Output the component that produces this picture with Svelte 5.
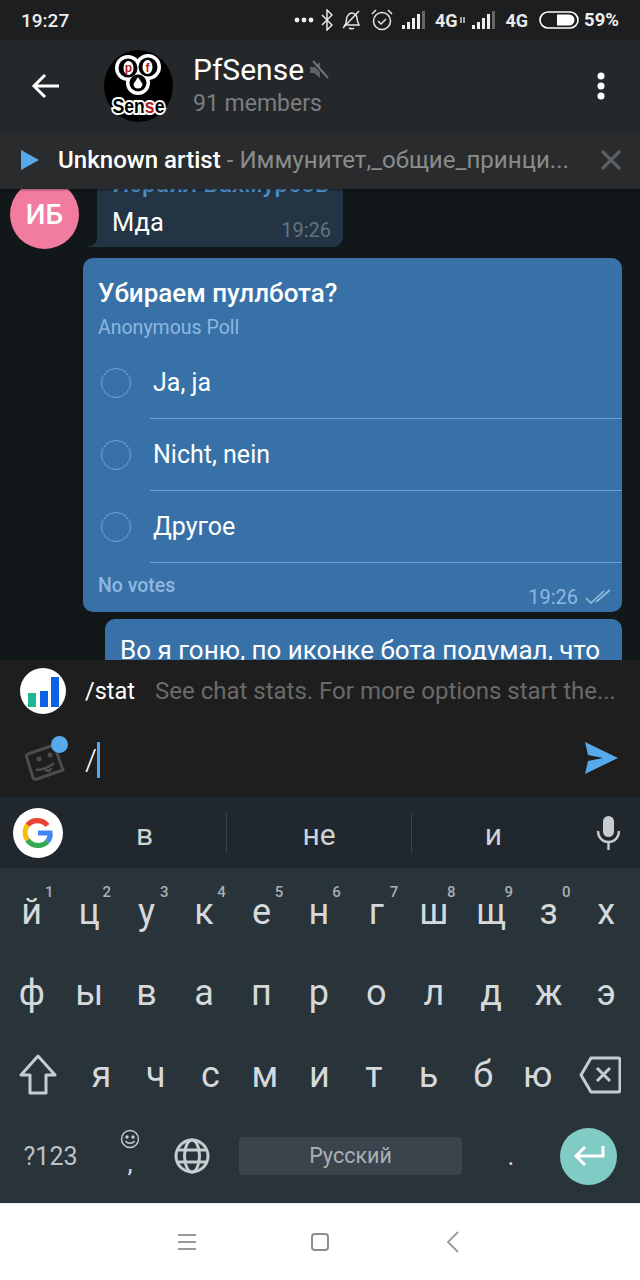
<script>
  const row1 = [['й','1'],['ц','2'],['у','3'],['к','4'],['е','5'],['н','6'],['г','7'],['ш','8'],['щ','9'],['з','0'],['х','']];
  const row2 = ['ф','ы','в','а','п','р','о','л','д','ж','э'];
  const row3 = ['я','ч','с','м','и','т','ь','б','ю'];
  const options = ['Ja, ja','Nicht, nein','Другое'];
</script>

<div class="phone">
  <div class="status">
    <span class="clock">19:27</span>
    <div class="sicons">
      <svg width="20" height="6" viewBox="0 0 20 6" class="dots"><circle cx="3" cy="3" r="2.4"/><circle cx="10" cy="3" r="2.4"/><circle cx="17" cy="3" r="2.4"/></svg>
      <svg width="12" height="22" viewBox="0 0 12 22" class="line"><path d="M1 6l10 10-5 5V1l5 5L1 16"/></svg>
      <svg width="22" height="22" viewBox="0 0 22 22" class="line"><path d="M4 16c2-2 1-6 2-8s3-4 5-4 5 2 5 5 1 5 2 7zM8 19c2 1 4 1 5 0M2 19L18 2"/></svg>
      <svg width="22" height="24" viewBox="0 0 22 24" class="line last"><circle cx="11" cy="13" r="8.500"/><path d="M7 13l3 3 5-5M1 6l4-4M21 6l-4-4"/></svg>
      <svg class="sig" width="25" height="20" viewBox="0 0 25 20"><rect x="0" y="15" width="3" height="4"/><rect x="5" y="12" width="3" height="7"/><rect x="10" y="8" width="3" height="11"/><rect x="15" y="4" width="3" height="15"/><rect x="20" y="1" width="3" height="18" opacity=".35"/></svg>
      <span class="g4">4G</span>
      <svg class="sig mini" width="6" height="8" viewBox="0 0 6 8"><path d="M1 1v6M4 7V1" stroke="#fff" stroke-width="1.2"/></svg>
      <svg class="sig" width="25" height="20" viewBox="0 0 25 20"><rect x="0" y="15" width="3" height="4"/><rect x="5" y="12" width="3" height="7"/><rect x="10" y="8" width="3" height="11"/><rect x="15" y="4" width="3" height="15"/><rect x="20" y="1" width="3" height="18" opacity=".35"/></svg>
      <span class="g4 wide">4G</span>
      <svg class="batt" width="40" height="20" viewBox="0 0 40 20"><rect x="1" y="2" width="38" height="16" rx="8" fill="none" stroke="#fff" stroke-width="1.6"/><path d="M18 4.500h12a5.500 5.500 0 0 1 0 11H18z" fill="#fff"/></svg>
      <span class="pct">59%</span>
    </div>
  </div>

  <header class="head">
    <svg class="back" width="30" height="26" viewBox="0 0 30 26"><path d="M28 13H3M14 2L3 13l11 11" fill="none" stroke="#fff" stroke-width="3"/></svg>
    <svg class="logo" width="69" height="84" viewBox="0 0 69 84">
      <ellipse cx="34.500" cy="42" rx="34.500" ry="36" fill="#000"/>
      <g fill="#fff"><circle cx="24" cy="24" r="13"/><circle cx="44" cy="23" r="13"/><circle cx="34" cy="39" r="12"/></g>
      <g fill="#000"><circle cx="24" cy="24" r="9.500"/><circle cx="44" cy="23" r="9.500"/><circle cx="34" cy="39" r="8.500"/></g>
      <ellipse cx="24.500" cy="24" rx="5" ry="7" fill="#fff"/>
      <ellipse cx="43.500" cy="23" rx="5" ry="7" fill="#fff"/>
      <text x="24.500" y="28" class="pf" text-anchor="middle">p</text><text x="43.500" y="28" class="pf" text-anchor="middle">f</text>
      <path d="M34 33l4.500 7a4.500 4.500 0 1 1-9 0z" fill="#fff"/>
      <text x="34.500" y="69" class="sense" text-anchor="middle" textLength="52" lengthAdjust="spacingAndGlyphs">Sen<tspan fill="#b01c20">s</tspan>e</text>
    </svg>
    <div class="htext">
      <div class="hname">PfSense
        <svg width="20" height="20" viewBox="0 0 20 20"><path d="M1 7h4l6-5v16l-6-5H1z" fill="#5f6264"/><path d="M3 1l16 18" stroke="#25282a" stroke-width="3"/><path d="M4 1l15 17" stroke="#707375" stroke-width="2"/></svg>
      </div>
      <div class="hsub">91 members</div>
    </div>
    <svg class="more" width="10" height="28" viewBox="0 0 10 28"><circle cx="5" cy="4" r="3.500"/><circle cx="5" cy="14" r="3.500"/><circle cx="5" cy="24" r="3.500"/></svg>
  </header>

  <div class="player">
    <svg width="20" height="22" viewBox="0 0 20 22"><path d="M1 1l18 10L1 21z" fill="#56a9ea"/></svg>
    <div class="ptext"><span class="pa">Unknown artist</span> <span class="pt">- Иммунитет,_общие_принци...</span></div>
    <svg width="22" height="22" viewBox="0 0 22 22"><path d="M2 2l18 18M20 2L2 20" stroke="#5c5f61" stroke-width="3.200"/></svg>
  </div>

  <main class="chat">
    <div class="inrow">
      <div class="avatar">ИБ</div>
      <div class="inbubble">
        <div class="iname">Исраил Вахмурсов</div>
        <div class="imsg">Мда</div>
        <div class="itime">19:26</div>
      </div>
    </div>

    <div class="poll">
      <div class="ptitle">Убираем пуллбота?</div>
      <div class="psub">Anonymous Poll</div>
      <div class="opts">
        {#each options as o}
          <div class="opt">
            <span class="radio"></span>
            <span class="otext">{o}</span>
          </div>
        {/each}
      </div>
      <div class="pfoot">
        <span class="novotes">No votes</span>
        <span class="ptime">19:26
          <svg width="26" height="16" viewBox="0 0 26 16" fill="none" stroke="#8fb9de" stroke-width="1.700"><path d="M1 9l5 5L19 2M11 13L25 1"/></svg>
        </span>
      </div>
    </div>

    <div class="nextb">Во я гоню, по иконке бота подумал, что</div>
  </main>

  <div class="suggest">
    <svg class="botic" width="46" height="46" viewBox="0 0 46 46"><circle cx="23" cy="23" r="23" fill="#fff"/><rect x="8" y="25" width="8" height="14" fill="#1cb792"/><rect x="20" y="23" width="8" height="16" fill="#0a63e6"/><rect x="31" y="9" width="8" height="30" fill="#0a63e6"/></svg>
    <span class="cmd">/stat</span>
    <span class="cdesc">See chat stats. For more options start the...</span>
  </div>

  <div class="input">
    <div class="stickwrap">
      <svg width="44" height="46" viewBox="0 0 44 46" fill="none" stroke="#4c4c4c" stroke-width="3"><path d="M5 17L31 8l9 25-26 9c-3 1-3 0-4-1L4 21c-1-2-1-3 1-4z"/><circle cx="16" cy="22" r="2.500" fill="#4c4c4c" stroke="none"/><circle cx="27" cy="18" r="2.500" fill="#4c4c4c" stroke="none"/><path d="M13 33c6 0 12-2 18-7" stroke-width="2.400"/><path d="M22 31c1 4 5 4 6 0" stroke-width="2.400"/></svg>
      <span class="bdot"></span>
    </div>
    <span class="slash">/</span><span class="caret"></span>
    <svg class="send" width="34" height="34" viewBox="0 0 34 34"><path d="M1 1l33 16L1 33l3-13 15-3-15-3z" fill="#56a9ea"/></svg>
  </div>

  <div class="sugbar">
    <div class="gwrap">
      <svg width="50" height="50" viewBox="0 0 50 50"><circle cx="25" cy="25" r="25" fill="#fff"/>
        <g fill="none" stroke-width="5.200"><path d="M34.500 17.500A13 13 0 0 0 14.500 17" stroke="#ea4335"/><path d="M14.500 17a13 13 0 0 0 0 15" stroke="#fbbc05"/><path d="M14.500 32a13 13 0 0 0 20 1.500" stroke="#34a853"/><path d="M34.500 33.500c2-2.500 3-5 2.500-8.500H25" stroke="#4285f4"/></g></svg>
    </div>
    <div class="sug s1">в</div><span class="sep"></span>
    <div class="sug s2">не</div><span class="sep"></span>
    <div class="sug s3">и</div>
    <svg class="mic" width="24" height="36" viewBox="0 0 24 36"><rect x="7" y="1" width="11" height="21" rx="5.500" fill="#c7ccd0"/><path d="M2 16c0 7 5 11 10.500 11S23 23 23 16M12.500 27v8" fill="none" stroke="#c7ccd0" stroke-width="2.400"/></svg>
  </div>

  <div class="kbd">
    <div class="krow">
      {#each row1 as [k,n]}
        <div class="key">{k}{#if n}<span class="num">{n}</span>{/if}</div>
      {/each}
    </div>
    <div class="krow">
      {#each row2 as k}<div class="key">{k}</div>{/each}
    </div>
    <div class="krow r3">
      <div class="fn shift"><svg width="38" height="42" viewBox="0 0 38 42"><path d="M19 2L2 21h9v18h16V21h9z" fill="none" stroke="#c7ccd0" stroke-width="3" stroke-linejoin="round"/></svg></div>
      {#each row3 as k}<div class="key">{k}</div>{/each}
      <div class="fn del"><svg width="42" height="38" viewBox="0 0 42 38"><path d="M12 2h27a2 2 0 0 1 2 2v30a2 2 0 0 1-2 2H12L2 19z" fill="none" stroke="#c7ccd0" stroke-width="3" stroke-linejoin="round"/><path d="M18 12l13 13M31 12L18 25" stroke="#c7ccd0" stroke-width="3"/></svg></div>
    </div>
    <div class="krow r4">
      <div class="k123">?123</div>
      <div class="kemo">
        <svg width="20" height="20" viewBox="0 0 20 20" fill="none" stroke="#c7ccd0" stroke-width="1.400"><circle cx="10" cy="10" r="8.500"/><circle cx="7" cy="8" r="1" fill="#c7ccd0"/><circle cx="13" cy="8" r="1" fill="#c7ccd0"/><path d="M5.500 12c2 3 7 3 9 0"/></svg>
        <span>,</span>
      </div>
      <svg class="globe" width="36" height="36" viewBox="0 0 36 36" fill="none" stroke="#c7ccd0" stroke-width="3"><circle cx="18" cy="18" r="16"/><ellipse cx="18" cy="18" rx="7.500" ry="16"/><path d="M3 12h30M3 24h30"/></svg>
      <div class="space">Русский</div>
      <div class="dot">.</div>
      <div class="enter"><svg width="32" height="24" viewBox="0 0 32 24" fill="none" stroke="#fff" stroke-width="3"><path d="M30 2v10H3M12 3L3 12l9 9"/></svg></div>
    </div>
  </div>

  <nav class="nav">
    <svg width="20" height="18" viewBox="0 0 20 18" stroke="#999" stroke-width="1.800"><path d="M1 2h18M1 9h18M1 16h18"/></svg>
    <svg width="20" height="20" viewBox="0 0 20 20" fill="none" stroke="#8e8e8e" stroke-width="2"><rect x="2" y="2" width="16" height="16" rx="3"/></svg>
    <svg width="14" height="22" viewBox="0 0 14 22" fill="none" stroke="#999" stroke-width="1.800"><path d="M12 1L2 11l10 10"/></svg>
  </nav>
</div>

<style>
  :global(body) { margin: 0; background: #12171a; }
  .phone { width: 640px; height: 1280px; overflow: hidden; display: flex; flex-direction: column; font-family: Roboto, "Noto Sans", sans-serif; color: #fff; }

  .status { height: 40px; flex: none; background: #1c1e20; display: flex; align-items: center; justify-content: space-between; padding: 0 21px; box-sizing: border-box; }
  .clock { font-size: 19px; font-weight: 500; color: #eceded; }
  .sicons { display: flex; align-items: center; }
  .sicons svg { display: block; flex: none; }
  .dots { fill: #eee; margin-right: 7px; }
  .line { fill: none; stroke: #e6e6e6; stroke-width: 1.500; margin-right: 8px; }
  .line.last { margin-right: 9px; }
  .sig { fill: #eee; margin-right: 8px; }
  .g4 { font-size: 18px; font-weight: 700; color: #e8e8e8; margin-right: 3px; }
  .g4.wide { margin: 0 11px 0 0; }
  .sig.mini { margin-right: 6px; }
  .batt { margin-right: 5px; }
  .pct { font-size: 18.500px; font-weight: 700; color: #eee; }

  .head { height: 91px; flex: none; background: #25282a; display: flex; align-items: center; box-sizing: border-box; padding-left: 31px; }
  .back { flex: none; margin-right: 43px; }
  .logo { flex: none; margin-right: 20px; }
  .pf { font: 700 12px "Liberation Sans", sans-serif; fill: #b01c20; }
  .sense { font: 700 21px "Liberation Sans", sans-serif; fill: #000; stroke: #fff; stroke-width: 4px; paint-order: stroke; }
  .htext { flex: 1; }
  .hname { font-size: 30px; line-height: 34px; display: flex; align-items: center; gap: 5px; margin-top: -1px; }
  .hsub { font-size: 23px; line-height: 26px; color: #7b7e80; margin-top: 4px; }
  .more { fill: #fff; margin-right: 34px; flex: none; }

  .player { height: 58px; flex: none; background: #292b2c; display: flex; align-items: center; padding: 0 18px 0 20px; box-sizing: border-box; box-shadow: 0 1px 2px rgba(0,0,0,.4); position: relative; z-index: 1; }
  .ptext { flex: 1; margin-left: 18px; font-size: 24.100px; white-space: nowrap; overflow: hidden; }
  .pa { font-weight: 500; }
  .pt { color: #8a8c8d; }

  .chat { height: 471px; flex: none; background: #12171a; overflow: hidden; display: flex; flex-direction: column; }
  .inrow { display: flex; align-items: flex-end; margin-top: -20px; padding-left: 10px; flex: none; }
  .avatar { width: 69px; height: 69px; border-radius: 50%; background: #f27ba0; font-size: 28px; font-weight: 500; display: flex; align-items: center; justify-content: center; margin-bottom: -2px; flex: none; }
  .inbubble { margin-left: 18px; width: 246px; height: 78px; box-sizing: border-box; background: #233444; border-radius: 10px 10px 10px 0; padding: 0 15px; position: relative; }
  .inbubble::before { content: ""; position: absolute; left: -9px; bottom: 0; width: 9px; height: 10px; background: radial-gradient(circle at 0 0, transparent 9px, #233444 9.500px); }
  .iname { font-size: 24.500px; font-weight: 500; line-height: 24px; color: #4f8fc9; white-space: nowrap; padding-top: 3px; height: 24px; }
  .imsg { font-size: 25.500px; line-height: 30px; margin-top: 11px; }
  .itime { position: absolute; right: 12px; bottom: 5px; font-size: 20px; color: #66727e; }

  .poll { flex: none; margin: 11px 18px 0 83px; height: 354px; box-sizing: border-box; background: #3871a7; border-radius: 10px; padding-top: 20px; overflow: hidden; display: flex; flex-direction: column; }
  .ptitle { font-size: 26px; font-weight: 500; line-height: 30px; padding-left: 15px; }
  .psub { font-size: 19.500px; line-height: 24px; color: #8db8e0; padding-left: 15px; margin-top: 8px; }
  .opts { margin-top: 7px; }
  .opt { display: flex; align-items: center; height: 72px; }
  .radio { width: 28px; height: 28px; border: 1.500px solid #70a3d1; border-radius: 50%; margin-left: 18px; margin-right: 23px; flex: none; }
  .otext { flex: 1; font-size: 25px; align-self: stretch; display: flex; align-items: center; border-bottom: 1px solid #6da0cf; margin-right: -2px; padding-left: 3px; margin-left: -4px; }
  .pfoot { display: flex; justify-content: space-between; padding: 11px 11px 0 15px; }
  .novotes { font-size: 19.500px; font-weight: 500; color: #8db8e0; }
  .ptime { font-size: 20px; color: #8db8e0; display: flex; align-items: center; gap: 7px; margin-top: 11px; }

  .nextb { flex: none; margin: 7px 18px 0 105px; height: 80px; box-sizing: border-box; background: #3871a7; border-radius: 10px 10px 0 0; padding: 15px 0 0 15px; font-size: 26px; line-height: 32px; white-space: nowrap; }

  .suggest { height: 62px; flex: none; background: #1e1e1e; display: flex; align-items: center; padding-left: 20px; }
  .botic { flex: none; margin-right: 19px; }
  .cmd { font-size: 23.500px; margin-right: 20px; }
  .cdesc { font-size: 24px; color: #6a6a6a; white-space: nowrap; }

  .input { height: 75px; flex: none; background: #1e1e1e; display: flex; align-items: center; padding-left: 23px; box-sizing: border-box; }
  .stickwrap { width: 44px; height: 46px; position: relative; margin-right: 18px; flex: none; }
  .bdot { position: absolute; right: -1px; top: -1px; width: 17px; height: 17px; border-radius: 50%; background: #56a9ea; }
  .slash { font-size: 30px; font-weight: 300; }
  .caret { width: 3px; height: 36px; background: #56a9ea; }
  .send { margin-left: auto; margin-right: 22px; margin-bottom: 3px; }

  .sugbar { height: 71px; flex: none; background: #21282d; display: flex; align-items: center; padding-left: 13px; box-sizing: border-box; }
  .gwrap { width: 50px; height: 50px; flex: none; }
  .gwrap svg { display: block; }
  .sug { text-align: center; font-size: 30px; color: #cfd3d6; flex: none; padding-top: 3px; }
  .s1 { width: 163px; }
  .s2 { width: 184px; }
  .s3 { width: 163px; }
  .sep { width: 1px; height: 40px; background: #3a4248; flex: none; }
  .mic { margin-left: auto; margin-right: 20px; flex: none; }

  .kbd { height: 335px; flex: none; background: #29333a; display: flex; flex-direction: column; box-sizing: border-box; padding-top: 3px; }
  .krow { height: 81.500px; flex: none; display: grid; grid-template-columns: repeat(11, 57.450px); padding-left: 3px; align-items: center; }
  .key { text-align: center; font-size: 36px; line-height: 1; color: #d5d9dc; position: relative; }
  .num { position: absolute; left: 42px; top: -9px; font-size: 15px; color: #a9aeb2; line-height: 1; font-weight: 500; }
  .r3 { grid-template-columns: 74px repeat(9, 54.560px) 1fr; padding-left: 0; }
  .fn { display: flex; justify-content: center; align-items: center; }
  .fn.shift { margin-left: 2px; }
  .fn.del { margin-right: 4px; }
  .fn svg { display: block; }
  .r4 { display: flex; padding-left: 0; }
  .k123 { width: 101px; text-align: center; font-size: 25px; color: #bcc1c5; flex: none; }
  .kemo { width: 58px; flex: none; display: flex; flex-direction: column; align-items: center; color: #d5d9dc; font-size: 26px; line-height: 16px; margin-top: -12px; }
  .kemo svg { margin-bottom: 6px; }
  .globe { flex: none; margin-left: 15px; margin-right: 29px; }
  .space { width: 223px; height: 38px; background: #3a444c; border-radius: 4px; flex: none; text-align: center; line-height: 38px; font-size: 21.500px; color: #aab0b4; }
  .dot { width: 98px; text-align: center; font-size: 26px; color: #d5d9dc; flex: none; }
  .enter { width: 57px; height: 57px; border-radius: 50%; background: #80cbc4; display: flex; align-items: center; justify-content: center; flex: none; }

  .nav { height: 77px; flex: none; background: #fff; display: grid; grid-template-columns: repeat(3, 133px); justify-items: center; align-items: center; border-top: 1px solid #e8ecef; box-sizing: border-box; justify-content: center; }
</style>
